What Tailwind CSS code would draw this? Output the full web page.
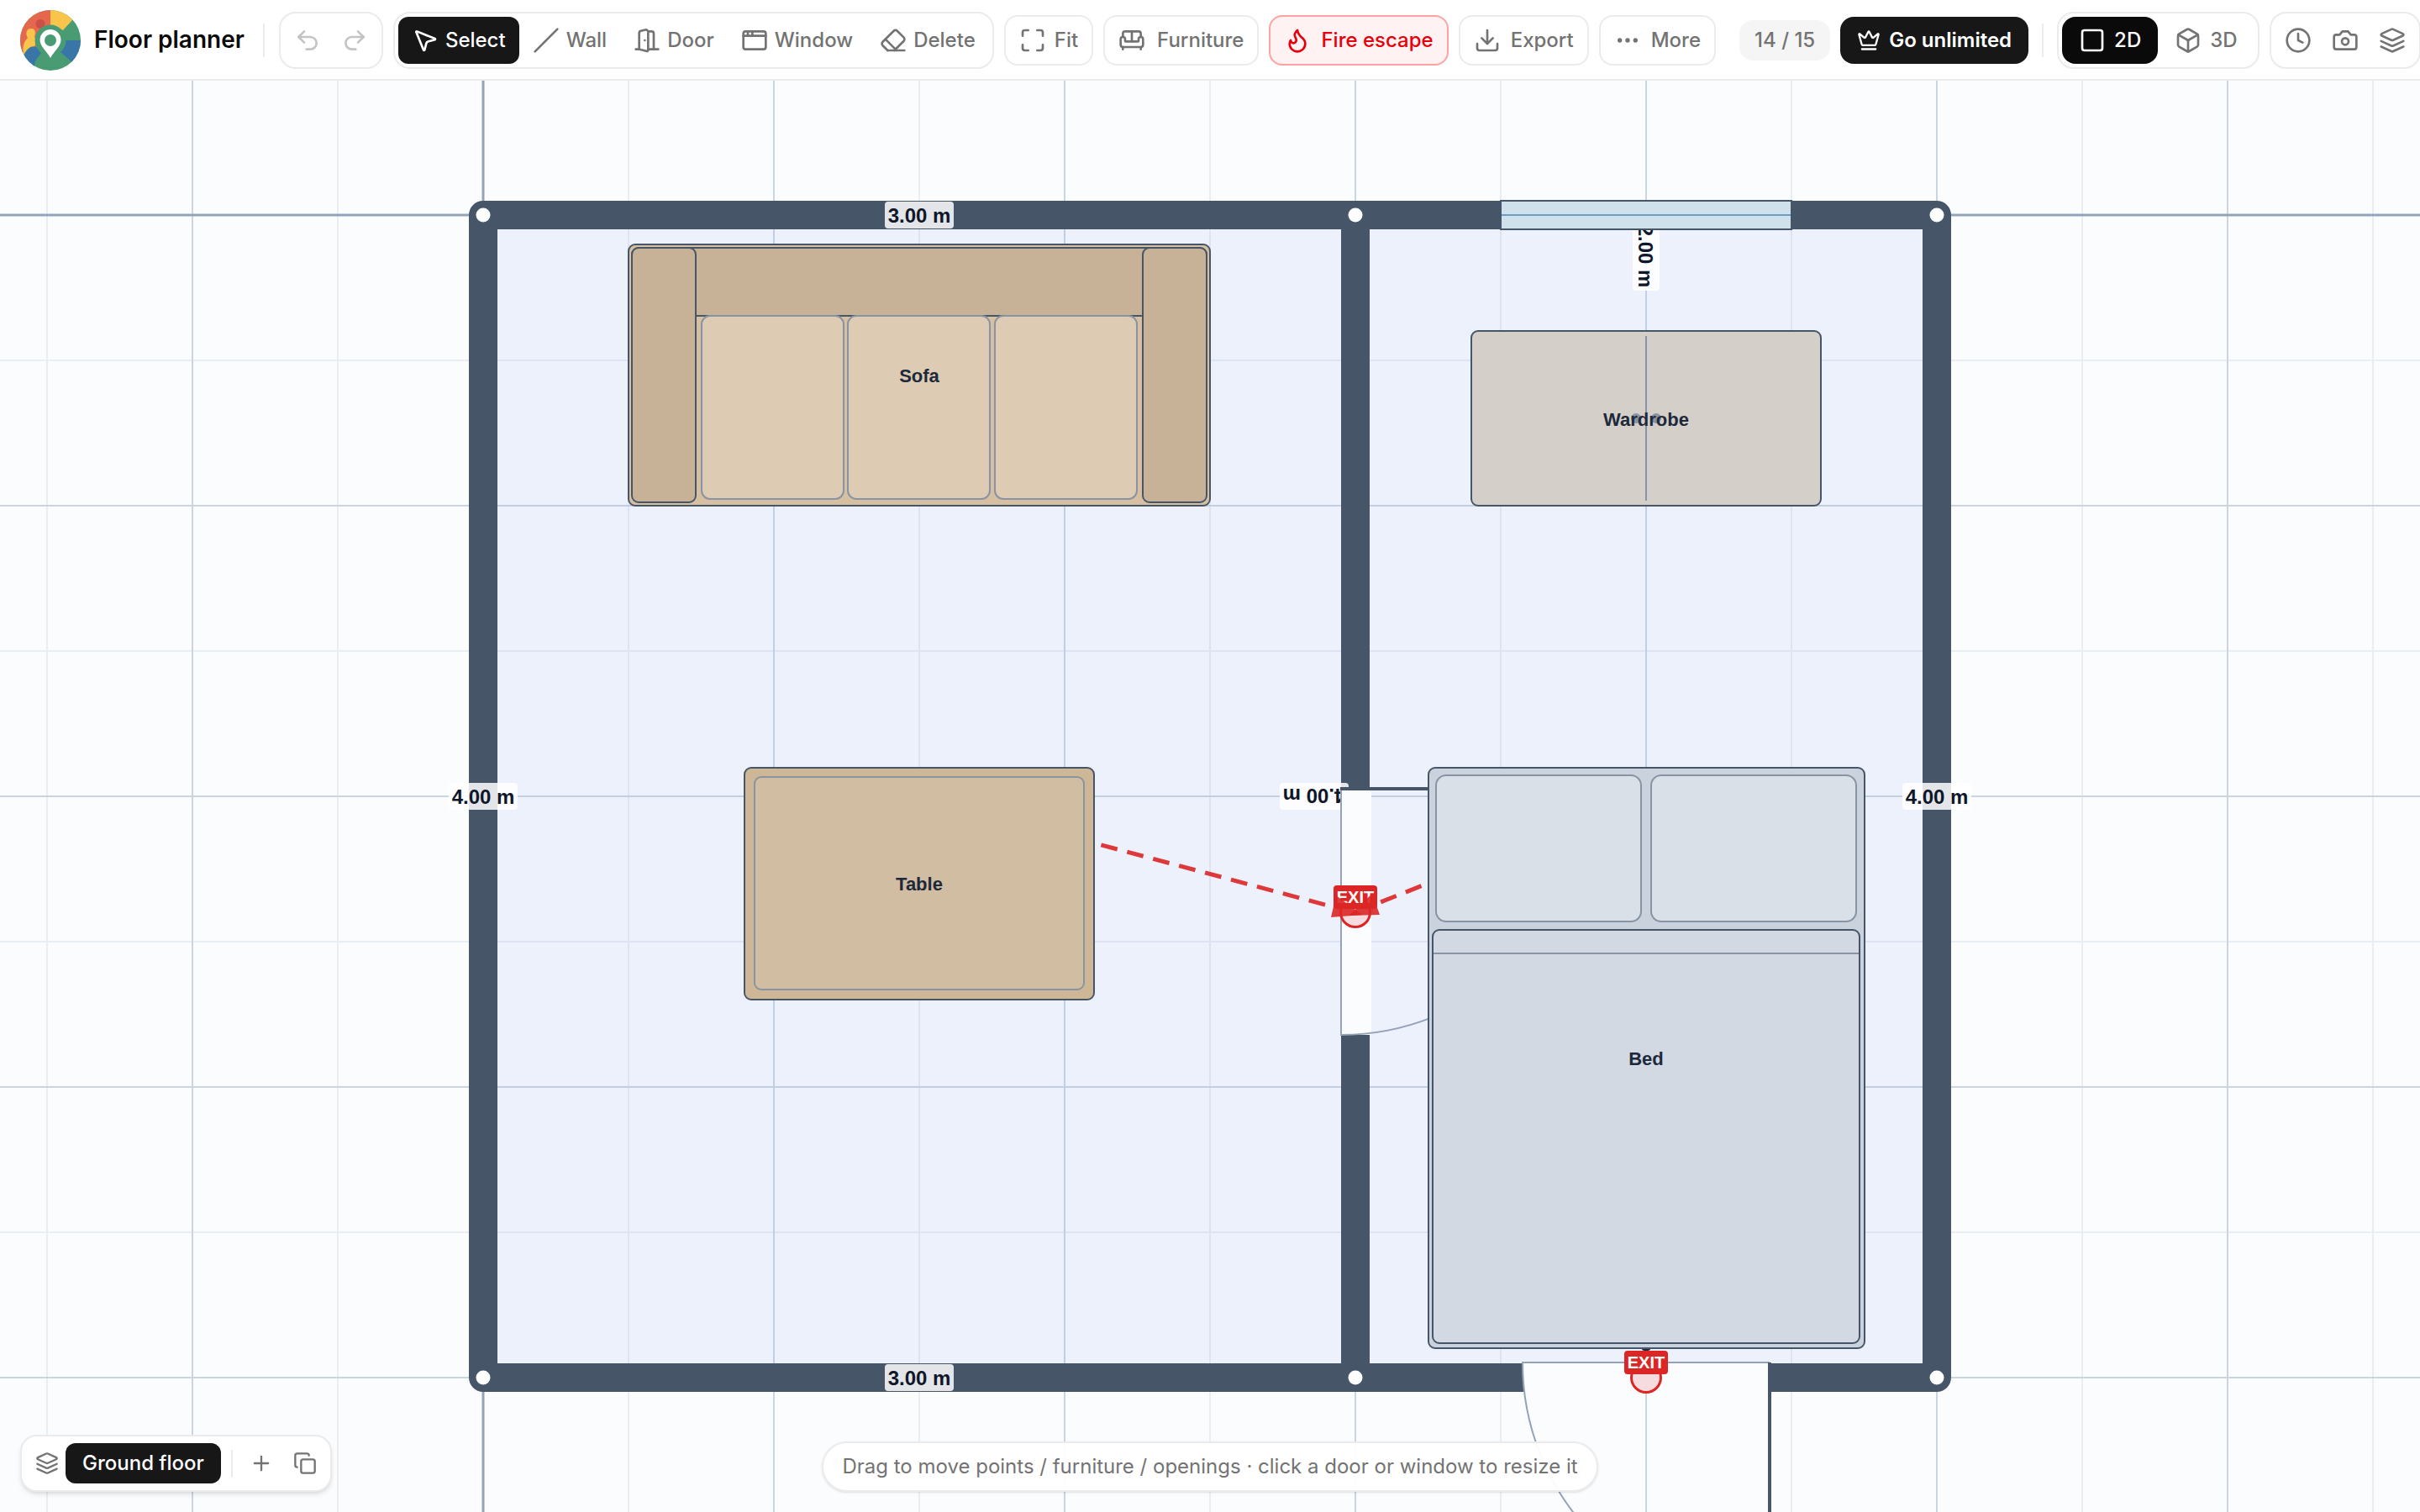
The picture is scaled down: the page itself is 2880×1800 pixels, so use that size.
<!DOCTYPE html>
<html lang="en">
<head>
  <meta charset="UTF-8" />
  <meta name="viewport" content="width=device-width, initial-scale=1" />
  <title>Floor planner</title>
  <script src="https://cdn.jsdelivr.net/npm/@tailwindcss/browser@4"></script>
  <style>
    body {
      font-family: 'Inter', sans-serif;
    }
    .icon {
      fill: none;
      stroke: currentColor;
      stroke-width: 2;
      stroke-linecap: round;
      stroke-linejoin: round;
      flex-shrink: 0;
    }
    .plan text {
      font-family: 'Liberation Sans', Arial, sans-serif;
      font-weight: 700;
      text-anchor: middle;
    }
  </style>
</head>
<body class="h-screen flex flex-col overflow-hidden bg-[#fbfcfe] text-2xl font-medium text-[#737373]">

  <!-- Toolbar -->
  <header class="h-24 shrink-0 flex items-center gap-3 pl-6 pt-0.5 bg-white border-b-2 border-[#ebebeb] whitespace-nowrap overflow-hidden">
    <svg class="size-18 shrink-0" viewBox="0 0 72 72" aria-hidden="true">
      <clipPath id="logoClip"><circle cx="36" cy="36" r="36" /></clipPath>
      <g clip-path="url(#logoClip)">
        <rect width="72" height="72" fill="#489b72" />
        <path d="M0 0H36V36L0 52Z" fill="#e5674e" />
        <path d="M36 0H72L62 12L51 24L36 18Z" fill="#f8c44c" />
        <path d="M6 58C1 46 4 38 9 33C6 28 7 22 13 22C18 22 19 27 17 32L20 38L8 58Z" fill="#f8c44c" />
        <circle cx="24" cy="16.500" r="5.500" fill="#c94f47" />
        <path d="M2 58C8 44 14 42 19 44C25 46 27 50 23 54C19 58 17 62 17 68L4 70Z" fill="#3a75a8" />
        <path d="M52 36H72V50L62 62L48 50Z" fill="#3a75a8" />
        <circle cx="36" cy="36" r="18.500" fill="#489b72" />
        <path d="M36 23a12.500 12.500 0 0 1 12.500 12.500c0 8-8 13-12.500 21.500c-4.500-8.500-12.500-13.500-12.500-21.500A12.500 12.500 0 0 1 36 23z" fill="#fff" />
        <circle cx="36" cy="36" r="7" fill="#489b72" />
      </g>
    </svg>
    <h1 class="ml-1 text-[28px] font-semibold text-[#0a0a0a]">Floor planner</h1>
    <div class="ml-2.5 mr-1.25 h-10 w-0.5 shrink-0 bg-[#ebebeb]"></div>

    <div class="flex shrink-0 p-1 border-2 border-[#ebebeb] rounded-[20px] text-[#c4c4c4]">
      <button class="size-14 flex items-center justify-center" aria-label="Undo" disabled>
        <svg class="icon size-8" viewBox="0 0 24 24"><path d="M9 14 4 9l5-5" /><path d="M4 9h10.500a5.500 5.500 0 0 1 0 11H11" /></svg>
      </button>
      <button class="size-14 flex items-center justify-center" aria-label="Redo" disabled>
        <svg class="icon size-8" viewBox="0 0 24 24"><path d="m15 14 5-5-5-5" /><path d="M20 9H9.500a5.500 5.500 0 0 0 0 11H13" /></svg>
      </button>
    </div>

    <div class="flex shrink-0 p-1 border-2 border-[#ebebeb] rounded-[20px]">
      <button class="h-14 px-4 flex items-center gap-2 rounded-xl bg-[#171717] text-white">
        <svg class="icon size-8" viewBox="0 0 24 24"><path d="M4.037 4.688a.495.495 0 0 1 .651-.651l16 6.500a.5.5 0 0 1-.063.947l-6.124 1.580a2 2 0 0 0-1.438 1.435l-1.579 6.126a.5.5 0 0 1-.947.063z" /></svg>
        Select
      </button>
      <button class="h-14 px-4 flex items-center gap-2">
        <svg class="icon size-8" viewBox="0 0 24 24"><path d="M22 2 2 22" /></svg>
        Wall
      </button>
      <button class="h-14 px-4 flex items-center gap-2">
        <svg class="icon size-8" viewBox="0 0 24 24"><path d="M13 4h3a2 2 0 0 1 2 2v14" /><path d="M2 20h3" /><path d="M13 20h9" /><path d="M10 12v.01" /><path d="M13 4.562v16.157a1 1 0 0 1-1.242.97L5 20V5.562a2 2 0 0 1 1.515-1.940l4-1A2 2 0 0 1 13 4.561Z" /></svg>
        Door
      </button>
      <button class="h-14 px-4 flex items-center gap-2">
        <svg class="icon size-8" viewBox="0 0 24 24"><rect x="2" y="4" width="20" height="16" rx="2" /><path d="M10 4v4" /><path d="M2 8h20" /><path d="M6 4v4" /></svg>
        Window
      </button>
      <button class="h-14 px-4 flex items-center gap-2">
        <svg class="icon size-8" viewBox="0 0 24 24"><path d="m7 21-4.300-4.300c-1-1-1-2.500 0-3.400l9.600-9.600c1-1 2.500-1 3.400 0l5.600 5.600c1 1 1 2.500 0 3.400L13 21" /><path d="M22 21H7" /><path d="m5 11 9 9" /></svg>
        Delete
      </button>
    </div>

    <button class="h-15 px-4 shrink-0 flex items-center gap-2.5 border-2 border-[#ebebeb] rounded-2xl">
      <svg class="icon size-8" viewBox="0 0 24 24"><path d="M8 3H5a2 2 0 0 0-2 2v3" /><path d="M21 8V5a2 2 0 0 0-2-2h-3" /><path d="M3 16v3a2 2 0 0 0 2 2h3" /><path d="M16 21h3a2 2 0 0 0 2-2v-3" /></svg>
      Fit
    </button>
    <button class="h-15 px-4 shrink-0 flex items-center gap-3.5 border-2 border-[#ebebeb] rounded-2xl">
      <svg class="icon size-8" viewBox="0 0 24 24"><path d="M20 9V6a2 2 0 0 0-2-2H6a2 2 0 0 0-2 2v3" /><path d="M2 16a2 2 0 0 0 2 2h16a2 2 0 0 0 2-2v-5a2 2 0 0 0-4 0v1.500a.5.5 0 0 1-.5.5h-11a.5.5 0 0 1-.5-.5V11a2 2 0 0 0-4 0z" /><path d="M4 18v2" /><path d="M20 18v2" /><path d="M12 4v9" /></svg>
      Furniture
    </button>
    <button class="h-15 px-4 shrink-0 flex items-center gap-3 border-2 border-[#ffa2a2] rounded-2xl bg-[#fef2f2] text-[#e7000b]">
      <svg class="icon size-8" viewBox="0 0 24 24"><path d="M8.500 14.500A2.500 2.500 0 0 0 11 12c0-1.380-.5-2-1-3-1.072-2.143-.224-4.054 2-6 .5 2.500 2 4.900 4 6.500 2 1.600 3 3.500 3 5.500a7 7 0 1 1-14 0c0-1.153.433-2.294 1-3a2.500 2.500 0 0 0 2.500 2.500z" /></svg>
      Fire escape
    </button>
    <button class="h-15 px-4 shrink-0 flex items-center gap-3 border-2 border-[#ebebeb] rounded-2xl">
      <svg class="icon size-8" viewBox="0 0 24 24"><path d="M21 15v4a2 2 0 0 1-2 2H5a2 2 0 0 1-2-2v-4" /><path d="m7 10 5 5 5-5" /><path d="M12 15V3" /></svg>
      Export
    </button>
    <button class="h-15 px-4 shrink-0 flex items-center gap-3 border-2 border-[#ebebeb] rounded-2xl">
      <svg class="icon size-8" viewBox="0 0 24 24"><circle cx="12" cy="12" r="1" /><circle cx="19" cy="12" r="1" /><circle cx="5" cy="12" r="1" /></svg>
      More
    </button>

    <span class="ml-4 h-12 px-4.5 shrink-0 flex items-center rounded-2xl bg-[#f5f5f5]">14 / 15</span>
    <button class="h-14 px-5 shrink-0 flex items-center gap-2.5 rounded-2xl bg-[#171717] text-white font-semibold">
      <svg class="icon size-7" viewBox="0 0 24 24"><path d="M11.562 3.266a.5.5 0 0 1 .876 0L15.390 8.870a1 1 0 0 0 1.516.294L21.183 5.500a.5.5 0 0 1 .798.519l-2.834 10.246a1 1 0 0 1-.956.734H5.810a1 1 0 0 1-.957-.734L2.020 6.020a.5.5 0 0 1 .798-.519l4.276 3.664a1 1 0 0 0 1.516-.294z" /><path d="M5 21h14" /></svg>
      Go unlimited
    </button>
    <div class="mx-1 h-10 w-0.5 shrink-0 bg-[#ebebeb]"></div>

    <div class="flex shrink-0 p-1 border-2 border-[#ebebeb] rounded-[20px]">
      <button class="h-14 px-5 flex items-center gap-2.5 rounded-2xl bg-[#0a0a0a] text-white">
        <svg class="icon size-8" viewBox="0 0 24 24"><rect x="3" y="3" width="18" height="18" rx="2" /></svg>
        2D
      </button>
      <button class="h-14 px-5 flex items-center gap-2.5">
        <svg class="icon size-8" viewBox="0 0 24 24"><path d="M21 8a2 2 0 0 0-1-1.730l-7-4a2 2 0 0 0-2 0l-7 4A2 2 0 0 0 3 8v8a2 2 0 0 0 1 1.730l7 4a2 2 0 0 0 2 0l7-4A2 2 0 0 0 21 16Z" /><path d="m3.300 7 8.700 5 8.700-5" /><path d="M12 22V12" /></svg>
        3D
      </button>
    </div>

    <div class="flex shrink-0 p-1 border-2 border-[#ebebeb] rounded-[20px]">
      <button class="size-14 flex items-center justify-center" aria-label="History">
        <svg class="icon size-8" viewBox="0 0 24 24"><circle cx="12" cy="12" r="10" /><path d="M12 6v6l4 2" /></svg>
      </button>
      <button class="size-14 flex items-center justify-center" aria-label="Snapshot">
        <svg class="icon size-8" viewBox="0 0 24 24"><path d="M14.500 4h-5L7 7H4a2 2 0 0 0-2 2v9a2 2 0 0 0 2 2h16a2 2 0 0 0 2-2V9a2 2 0 0 0-2-2h-3l-2.500-3z" /><circle cx="12" cy="13" r="3" /></svg>
      </button>
      <button class="size-14 flex items-center justify-center" aria-label="Layers">
        <svg class="icon size-8" viewBox="0 0 24 24"><path d="m12.830 2.180a2 2 0 0 0-1.660 0L2.600 6.080a1 1 0 0 0 0 1.830l8.580 3.910a2 2 0 0 0 1.660 0l8.580-3.900a1 1 0 0 0 0-1.830Z" /><path d="m22 12.650-9.170 4.160a2 2 0 0 1-1.660 0L2 12.650" /><path d="m22 17.650-9.170 4.160a2 2 0 0 1-1.660 0L2 17.650" /></svg>
      </button>
    </div>
  </header>

  <!-- Canvas -->
  <main class="relative flex-1 min-h-0">
    <svg class="plan block w-full h-full" viewBox="0 96 2880 1704" preserveAspectRatio="xMidYMid slice" role="img" aria-label="Ground floor plan">
      <defs>
        <!-- one tile is one metre, with a half metre line inside -->
        <pattern id="grid" x="574" y="255" width="346" height="346" patternUnits="userSpaceOnUse">
          <path d="M173 0h2v346h-2zM0 173h346v2H0z" fill="#e9edf4" />
          <path d="M0 0h2v346H0zM0 0h346v2H0z" fill="#cbd5e1" />
        </pattern>
      </defs>
      <rect x="0" y="96" width="2880" height="1704" fill="#fbfcfe" />
      <rect x="0" y="96" width="2880" height="1704" fill="url(#grid)" />
      <path d="M575 96V1800M0 256H2880" stroke="#94a3b8" stroke-width="3" />

      <!-- rooms and walls -->
      <rect x="575" y="256" width="1730" height="1384" fill="#7491f0" fill-opacity="0.1" />
      <g stroke="#475569" stroke-width="34" stroke-linejoin="round" fill="none">
        <path d="M575 256H2305V1640H575Z" />
        <path d="M1613 256V1640" />
      </g>

      <!-- wall lengths -->
      <g font-size="24" fill="#0f172a">
        <g transform="translate(1094 256)"><rect x="-41" y="-16" width="82" height="32" rx="4" fill="#fff" fill-opacity="0.85" /><text y="9">3.00 m</text></g>
        <g transform="translate(1094 1640)"><rect x="-41" y="-16" width="82" height="32" rx="4" fill="#fff" fill-opacity="0.85" /><text y="9">3.00 m</text></g>
        <g transform="translate(575 948)"><rect x="-41" y="-16" width="82" height="32" rx="4" fill="#fff" fill-opacity="0.85" /><text y="9">4.00 m</text></g>
        <g transform="translate(2305 948)"><rect x="-41" y="-16" width="82" height="32" rx="4" fill="#fff" fill-opacity="0.85" /><text y="9">4.00 m</text></g>
        <g transform="translate(1564 948) rotate(180)"><rect x="-41" y="-16" width="82" height="32" rx="4" fill="#fff" fill-opacity="0.85" /><text y="9">4.00 m</text></g>
        <g transform="translate(1959 305) rotate(90)"><rect x="-41" y="-16" width="82" height="32" rx="4" fill="#fff" fill-opacity="0.85" /><text y="9">2.00 m</text></g>
      </g>

      <!-- doors -->
      <rect x="1596" y="939" width="36" height="293" fill="#fbfcfe" />
      <path d="M1596 939V1232A293 293 0 0 0 1889 939" fill="none" stroke="#94a3b8" stroke-width="2" />
      <path d="M1595 939H1889" stroke="#475569" stroke-width="4" />
      <rect x="1813" y="1622" width="292" height="36" fill="#fbfcfe" />
      <path d="M2106 1622H1812A294 294 0 0 0 2106 1916" fill="none" stroke="#94a3b8" stroke-width="2" />
      <path d="M2106 1622V1916" stroke="#475569" stroke-width="4" />

      <!-- window -->
      <rect x="1786" y="239" width="346" height="34" fill="#cfe1ea" stroke="#475569" stroke-width="2" />
      <path d="M1787 256H2131" stroke="#6b9ec4" stroke-width="2" />

      <!-- corner handles -->
      <g fill="#fff">
        <circle cx="575" cy="256" r="8.500" />
        <circle cx="1613" cy="256" r="8.500" />
        <circle cx="2305" cy="256" r="8.500" />
        <circle cx="575" cy="1640" r="8.500" />
        <circle cx="1613" cy="1640" r="8.500" />
        <circle cx="2305" cy="1640" r="8.500" />
      </g>

      <!-- exits -->
      <ellipse cx="1959" cy="1606" rx="5" ry="2" fill="#1e293b" />
      <g font-size="20">
        <g transform="translate(1613 1086)">
          <circle r="17.500" fill="#dc2626" fill-opacity="0.150" stroke="#dc2626" stroke-width="3" />
          <rect x="-26" y="-32" width="52" height="28" rx="4" fill="#dc2626" />
          <text y="-11" fill="#fff">EXIT</text>
        </g>
        <g transform="translate(1959 1640)">
          <circle r="17.500" fill="#dc2626" fill-opacity="0.150" stroke="#dc2626" stroke-width="3" />
          <rect x="-26" y="-32" width="52" height="28" rx="4" fill="#dc2626" />
          <text y="-11" fill="#fff">EXIT</text>
        </g>
      </g>

      <!-- escape routes -->
      <g stroke="#dc2626" stroke-width="5" stroke-dasharray="20 12" opacity="0.9">
        <path d="M1094 948L1588 1080" />
        <path d="M1959 948L1638 1076" />
      </g>
      <path d="M1621 1089L1584 1092L1590 1066Z" fill="#dc2626" fill-opacity="0.9" />
      <path d="M1605 1090L1642 1089L1633 1064Z" fill="#dc2626" fill-opacity="0.9" />

      <!-- furniture -->
      <g stroke="#475569" stroke-width="2">
        <rect x="748" y="291" width="692" height="311" rx="8" fill="#d6c0a1" />
        <rect x="752" y="295" width="684" height="81" rx="8" fill="#c7b297" />
        <rect x="752" y="295" width="76" height="303" rx="8" fill="#c7b297" />
        <rect x="1360" y="295" width="76" height="303" rx="8" fill="#c7b297" />
        <g fill="#ddccb3" stroke="#8894a3">
          <rect x="835" y="376" width="169" height="218" rx="10" />
          <rect x="1009" y="376" width="169" height="218" rx="10" />
          <rect x="1184" y="376" width="169" height="218" rx="10" />
        </g>

        <rect x="1751" y="394" width="416" height="208" rx="8" fill="#d4cfc8" />
        <path d="M1959 400V596" stroke="#8894a3" />
        <circle cx="1947" cy="498" r="6" fill="#8894a3" stroke="none" />
        <circle cx="1971" cy="498" r="6" fill="#8894a3" stroke="none" />

        <rect x="886" y="914" width="416" height="276" rx="8" fill="#ceb797" />
        <rect x="898" y="925" width="392" height="253" rx="8" fill="#d1bda1" stroke="#8894a3" />

        <rect x="1700" y="914" width="519" height="691" rx="8" fill="#cad2de" />
        <rect x="1709" y="923" width="244" height="174" rx="12" fill="#d9e0e8" stroke="#8894a3" />
        <rect x="1965" y="923" width="244" height="174" rx="12" fill="#d9e0e8" stroke="#8894a3" />
        <rect x="1705" y="1107" width="508" height="492" rx="8" fill="#d2d9e3" />
        <path d="M1706 1135H2212" stroke="#8894a3" />
      </g>
      <g font-size="22" fill="#1e293b">
        <text x="1094" y="455">Sofa</text>
        <text x="1959" y="507">Wardrobe</text>
        <text x="1094" y="1060">Table</text>
        <text x="1959" y="1268">Bed</text>
      </g>
    </svg>

    <!-- Floors -->
    <div class="absolute left-6 bottom-6 flex items-center gap-2 p-2 bg-white border-2 border-[#ebebeb] rounded-[20px] shadow-md">
      <svg class="icon size-7 ml-2" viewBox="0 0 24 24" aria-hidden="true"><path d="m12.830 2.180a2 2 0 0 0-1.660 0L2.600 6.080a1 1 0 0 0 0 1.830l8.580 3.910a2 2 0 0 0 1.660 0l8.580-3.900a1 1 0 0 0 0-1.830Z" /><path d="m22 12.650-9.170 4.160a2 2 0 0 1-1.660 0L2 12.650" /><path d="m22 17.650-9.170 4.160a2 2 0 0 1-1.660 0L2 17.650" /></svg>
      <button class="h-12 px-5 rounded-xl bg-[#171717] text-white">Ground floor</button>
      <div class="mx-1 h-8 w-0.5 bg-[#ebebeb]"></div>
      <button class="h-12 w-11 flex items-center justify-center" aria-label="Add floor">
        <svg class="icon size-7" viewBox="0 0 24 24"><path d="M5 12h14" /><path d="M12 5v14" /></svg>
      </button>
      <button class="h-12 w-11 flex items-center justify-center" aria-label="Duplicate floor">
        <svg class="icon size-7" viewBox="0 0 24 24"><rect x="8" y="8" width="14" height="14" rx="2" /><path d="M4 16c-1.100 0-2-.9-2-2V4c0-1.100.9-2 2-2h10c1.100 0 2 .9 2 2" /></svg>
      </button>
    </div>

    <div class="absolute inset-x-0 bottom-6 flex justify-center pointer-events-none">
      <p class="h-15 px-5.5 flex items-center bg-white/95 border-2 border-[#ebebeb] rounded-full shadow-sm font-normal">Drag to move points / furniture / openings · click a door or window to resize it</p>
    </div>
  </main>

</body>
</html>
